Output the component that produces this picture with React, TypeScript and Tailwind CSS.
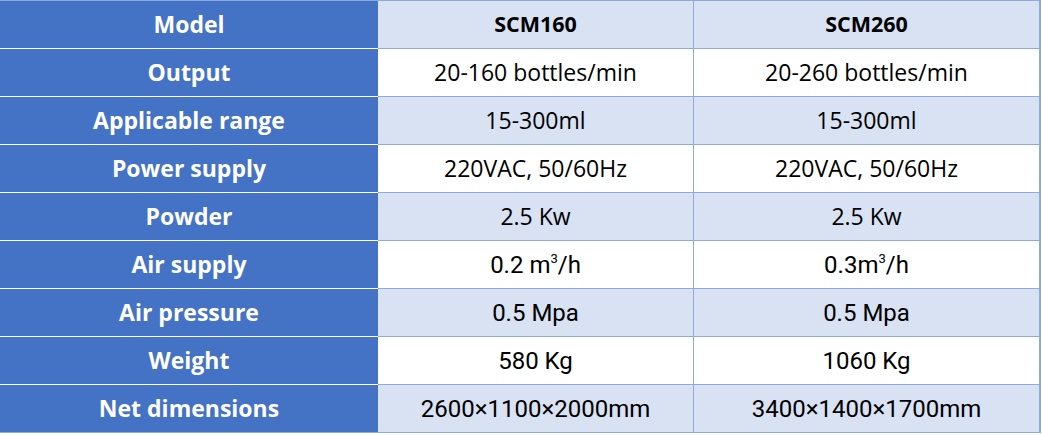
import React from 'react';

type Row = { label: string; a: React.ReactNode; b: React.ReactNode; narrow?: boolean };

const M3 = () => (
  <>
    m<sup className="text-[13px] relative -top-[10px]">3</sup>
  </>
);

const rows: Row[] = [
  { label: 'Output', a: '20-160 bottles/min', b: '20-260 bottles/min' },
  { label: 'Applicable range', a: '15-300ml', b: '15-300ml' },
  { label: 'Power supply', a: '220VAC, 50/60Hz', b: '220VAC, 50/60Hz' },
  { label: 'Powder', a: '2.5 Kw', b: '2.5 Kw' },
  { label: 'Air supply', a: <>0.2 <M3 />/h</>, b: <>0.3<M3 />/h</>, narrow: true },
  { label: 'Air pressure', a: '0.5 Mpa', b: '0.5 Mpa', narrow: true },
  { label: 'Weight', a: '580 Kg', b: '1060 Kg', narrow: true },
  { label: 'Net dimensions', a: '2600×1100×2000mm', b: '3400×1400×1700mm', narrow: true },
];

function Cell({ children, narrow, shaded, last }: { children: React.ReactNode; narrow?: boolean; shaded: boolean; last?: boolean }) {
  return (
    <div
      className={`flex items-center justify-center border-b border-[#8eaadb] ${last ? 'border-l border-[#8eaadb]' : ''} ${shaded ? 'bg-[#d9e2f3]' : 'bg-white'}`}
    >
      {narrow ? (
        <span className="whitespace-nowrap text-[24px] font-['Roboto',sans-serif]">{children}</span>
      ) : (
        <span className="text-[23px]">{children}</span>
      )}
    </div>
  );
}

export default function App() {
  return (
    <div className="w-[1042px] h-[435px] bg-white font-['Open_Sans','Noto_Sans',sans-serif] text-black">
      <div className="w-[1041px] border-t border-r-2 border-[#8eaadb]">
        <div className="grid grid-cols-[378px_315px_1fr] h-[48px]">
          <div className="flex items-center justify-center bg-[#4472c4] border-b border-white text-white font-bold text-[23px]">Model</div>
          <div className="flex items-center justify-center bg-[#d9e2f3] border-b border-[#8eaadb] font-bold text-[21.5px]">SCM160</div>
          <div className="flex items-center justify-center bg-[#d9e2f3] border-b border-l border-[#8eaadb] font-bold text-[21.5px]">SCM260</div>
        </div>
        {rows.map((r, i) => {
          const shaded = i % 2 === 1;
          const isLast = i === rows.length - 1;
          return (
            <div key={r.label} className="grid grid-cols-[378px_315px_1fr] h-[48px]">
              <div
                className={`flex items-center justify-center bg-[#4472c4] text-white font-bold text-[23px] ${isLast ? 'border-b border-[#8eaadb]' : 'border-b border-white'}`}
              >
                {r.label}
              </div>
              <Cell narrow={r.narrow} shaded={shaded}>{r.a}</Cell>
              <Cell narrow={r.narrow} shaded={shaded} last>{r.b}</Cell>
            </div>
          );
        })}
      </div>
    </div>
  );
}
